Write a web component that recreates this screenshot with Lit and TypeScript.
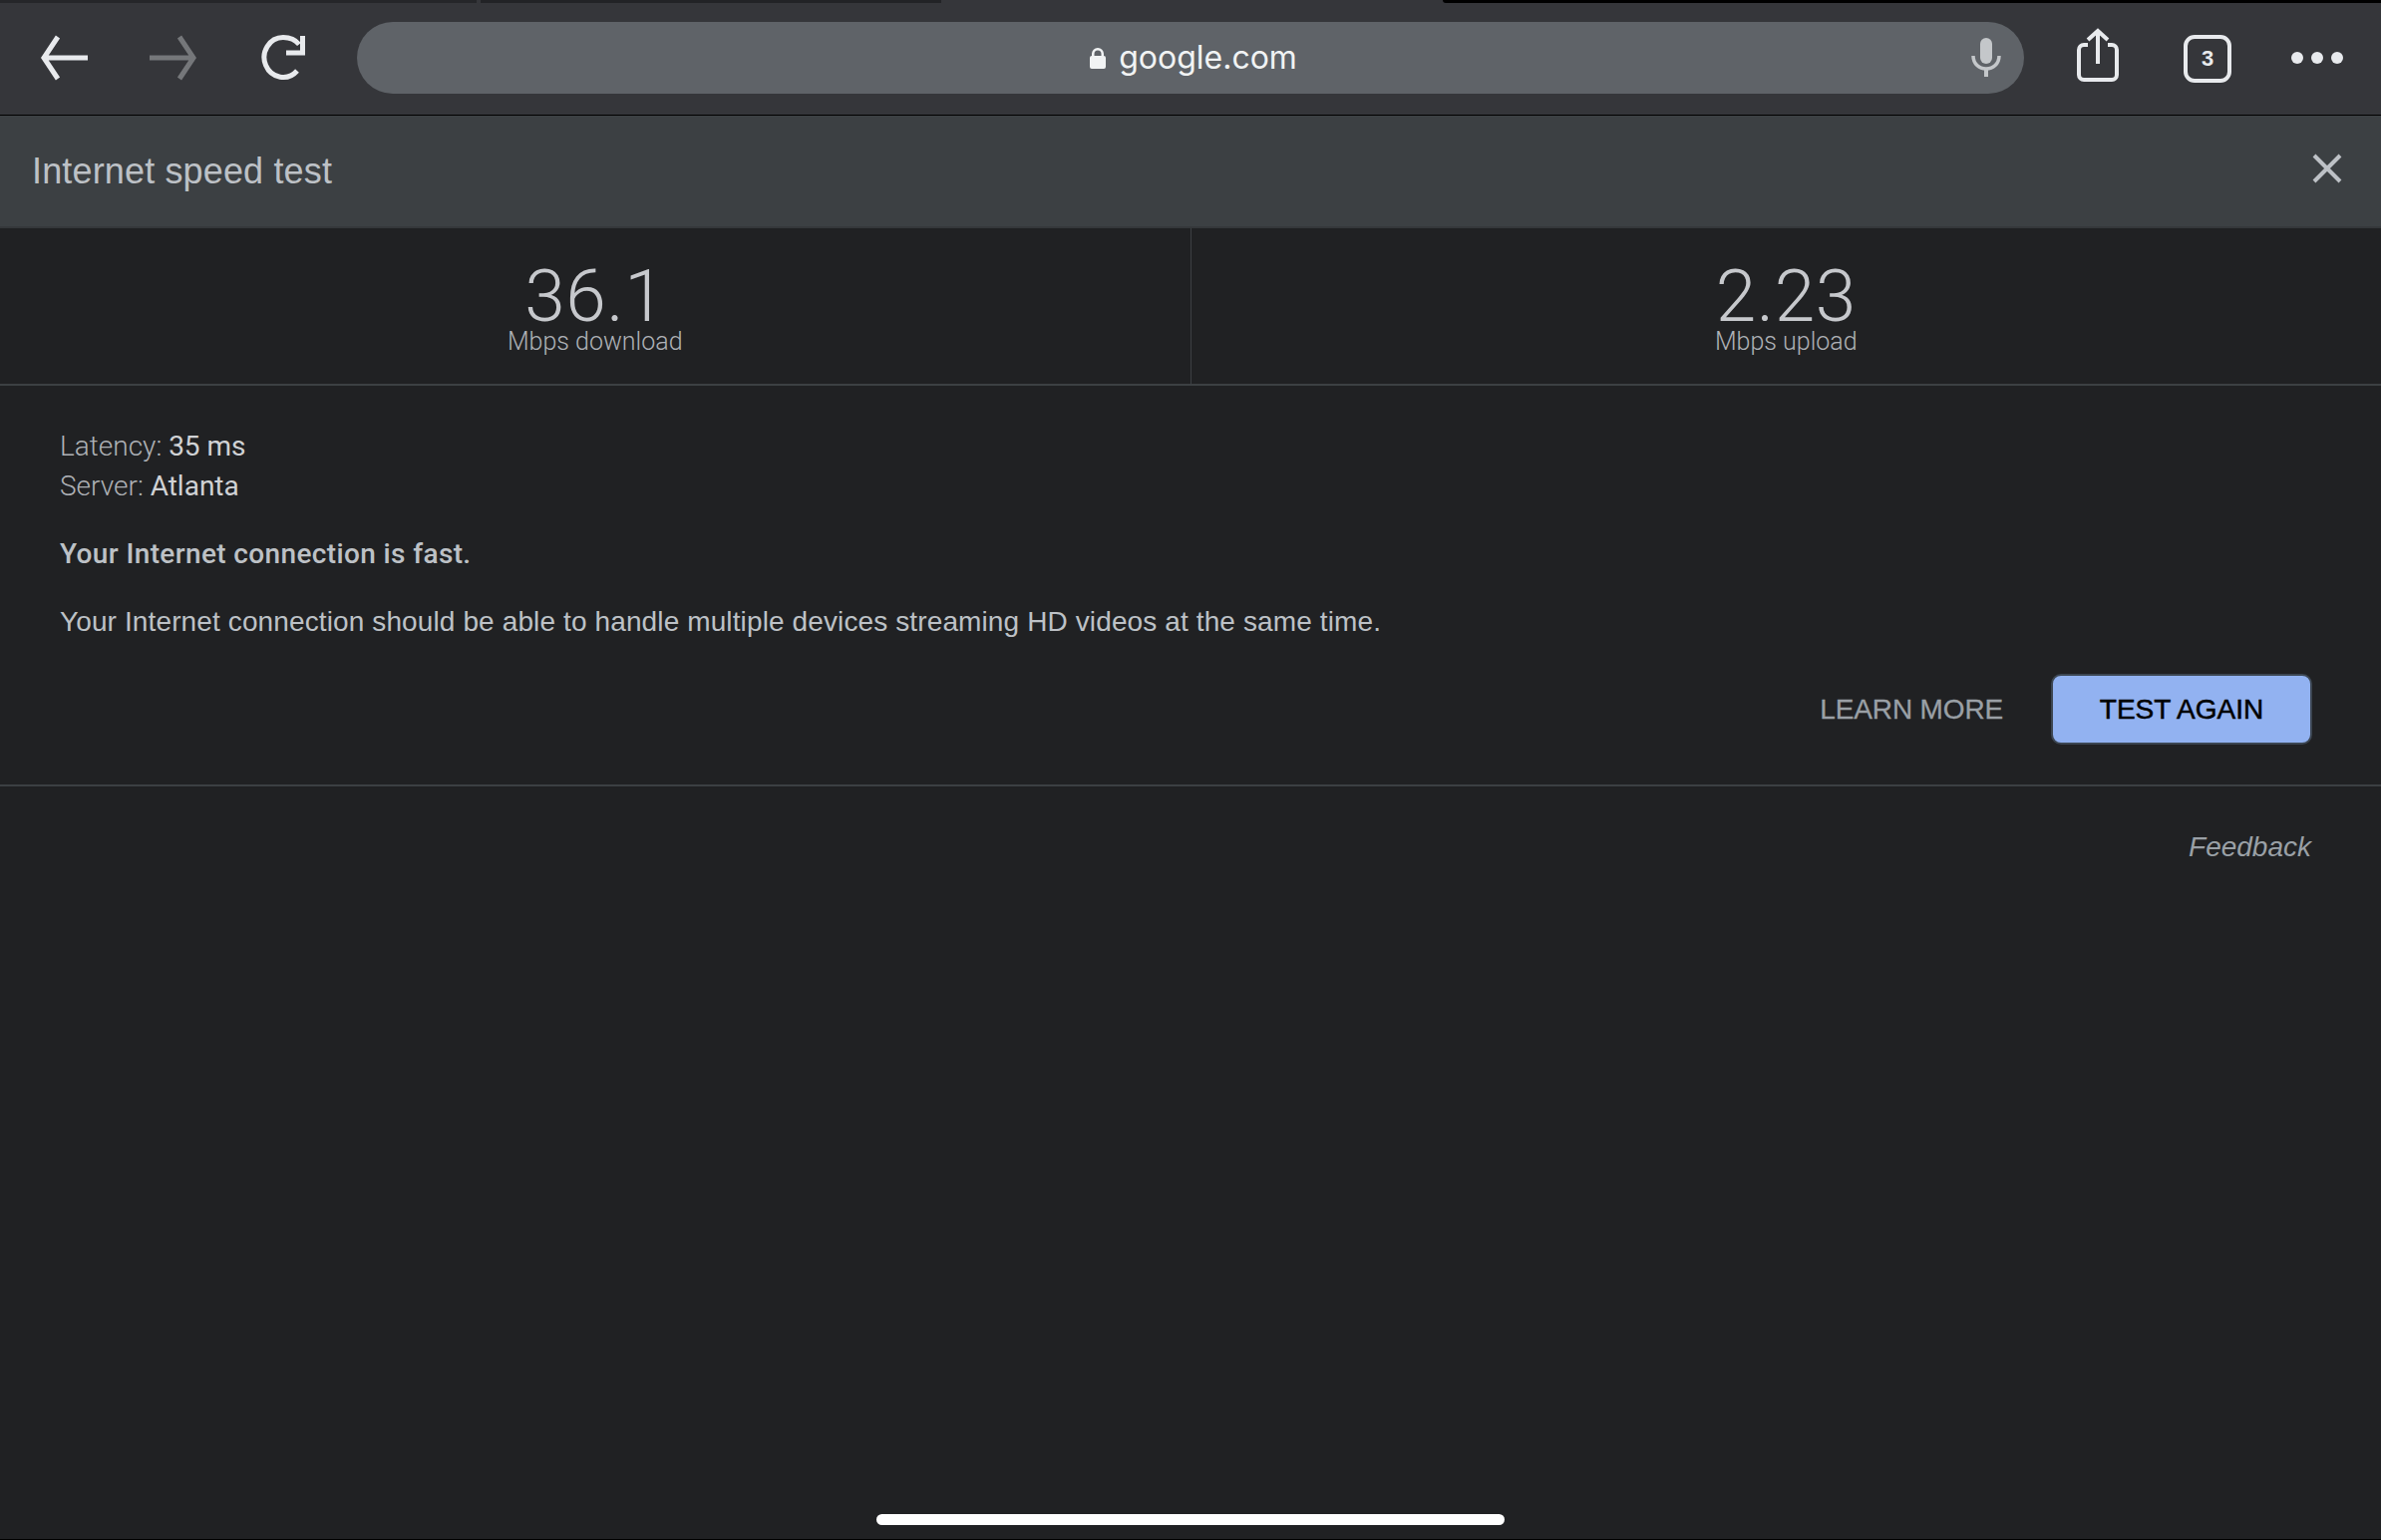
import { LitElement, html, css } from "lit";
import { customElement } from "lit/decorators.js";

@customElement("app-root")
export class AppRoot extends LitElement {
  static styles = css`
    :host {
      display: flex;
      flex-direction: column;
      position: relative;
      height: 1545px;
      overflow: hidden;
      background: #202123;
      font-family: "Liberation Sans", Arial, sans-serif;
      color: #bdc1c6;
    }

    .notch {
      position: absolute;
      top: 0;
      height: 3px;
    }
    .notch-a {
      left: 0;
      width: 478px;
      background: #252629;
    }
    .notch-b {
      left: 482px;
      width: 462px;
      background: #222326;
    }
    .notch-c {
      left: 1447px;
      width: 941px;
      background: #000;
      border-bottom-left-radius: 4px;
    }

    .toolbar {
      display: flex;
      align-items: center;
      flex: none;
      box-sizing: border-box;
      height: 116px;
      padding-top: 1px;
      background: #35363a;
      border-bottom: 1px solid #000;
    }
    .nav {
      display: flex;
      flex: none;
      width: 358px;
    }
    .nav-btn {
      display: flex;
      justify-content: center;
      width: 110px;
    }
    .nav-btn:first-child {
      margin-left: 9px;
    }
    .nav-btn:nth-child(2) {
      margin-right: 1px;
    }
    .omnibox {
      display: flex;
      align-items: center;
      justify-content: center;
      position: relative;
      flex: none;
      box-sizing: border-box;
      width: 1672px;
      height: 72px;
      padding-left: 6px;
      border-radius: 36px;
      background: #5f6368;
      color: #f1f3f4;
      font-family: Inter, "Liberation Sans", sans-serif;
      font-size: 32px;
      gap: 13px;
    }
    .url {
      margin-top: -2px;
    }
    .mic {
      position: absolute;
      right: 23px;
      top: 16px;
    }
    .actions {
      display: flex;
      align-items: center;
      flex: 1;
      padding-left: 19px;
    }
    .action {
      display: flex;
      justify-content: center;
      width: 110px;
    }
    .share {
      margin-bottom: 6px;
    }
    .dots {
      margin-left: 2px;
    }
    .tabs {
      display: flex;
      align-items: center;
      justify-content: center;
      box-sizing: border-box;
      width: 48px;
      height: 48px;
      margin-top: 2px;
      border: 4px solid #e8eaed;
      border-radius: 11px;
      color: #e8eaed;
      font-size: 22px;
      font-weight: 700;
    }

    .header {
      display: flex;
      align-items: center;
      justify-content: space-between;
      flex: none;
      box-sizing: border-box;
      height: 113px;
      padding: 1px 39px 0 32px;
      background: #3c4043;
      border-bottom: 2px solid #35383b;
      font-size: 36px;
      letter-spacing: 0.15px;
    }
    .close {
      margin-bottom: 6px;
    }

    .stats {
      display: flex;
      flex: none;
      box-sizing: border-box;
      height: 158px;
      border-bottom: 2px solid #3c4043;
    }
    .stat {
      display: flex;
      flex-direction: column;
      align-items: center;
      flex: 1;
      padding-top: 37px;
    }
    .stat + .stat {
      border-left: 1px solid #3c4043;
    }
    .stat-value {
      font-family: Roboto, "Liberation Sans", sans-serif;
      font-size: 73px;
      line-height: 62px;
      font-weight: 300;
      letter-spacing: 0.5px;
      color: #c6c8cc;
    }
    .stat-label {
      font-family: Roboto, "Liberation Sans", sans-serif;
      font-size: 25px;
      font-weight: 300;
      line-height: 28px;
      margin-top: 1px;
      color: #aeb1b6;
    }

    .result {
      flex: none;
      box-sizing: border-box;
      height: 402px;
      padding: 41px 69px 0 60px;
      border-bottom: 2px solid #3c4043;
      font-size: 28px;
    }
    .meta {
      line-height: 40px;
      font-family: Roboto, "Liberation Sans", sans-serif;
      font-weight: 300;
      color: #aeb1b6;
    }
    .meta b {
      font-weight: 400;
      color: #d0d2d5;
    }
    .headline {
      margin: 28px 0 0;
      line-height: 40px;
      font-family: Roboto, "Liberation Sans", sans-serif;
      font-weight: 500;
      letter-spacing: 0.37px;
      color: #bdc1c6;
    }
    .detail {
      margin: 28px 0 0;
      line-height: 40px;
      letter-spacing: 0.12px;
    }
    .buttons {
      display: flex;
      align-items: center;
      justify-content: flex-end;
      gap: 48px;
      margin-top: 32px;
    }
    .learn {
      font-size: 28px;
      letter-spacing: -0.15px;
      color: #9aa0a6;
      -webkit-text-stroke: 0.3px #9aa0a6;
    }
    .again {
      display: flex;
      align-items: center;
      justify-content: center;
      box-sizing: border-box;
      width: 262px;
      height: 71px;
      background: #92b2f1;
      border: 2px solid #3c4652;
      border-radius: 10px;
      color: #000;
      font-size: 28px;
      -webkit-text-stroke: 0.5px #000;
    }

    .feedback {
      align-self: flex-end;
      margin: 45px 70px 0 0;
      font-size: 28px;
      font-style: italic;
      line-height: 32px;
      color: #9aa0a6;
    }

    .home {
      position: absolute;
      left: 879px;
      bottom: 15px;
      width: 630px;
      height: 11px;
      border-radius: 6px;
      background: #fff;
    }
    .edge {
      position: absolute;
      left: 0;
      right: 0;
      bottom: 0;
      height: 1px;
      background: #000;
    }
  `;

  render() {
    return html`
      <div class="notch notch-a"></div>
      <div class="notch notch-b"></div>
      <div class="notch notch-c"></div>

      <div class="toolbar">
        <div class="nav">
          <div class="nav-btn">
            <svg width="50" height="46" viewBox="0 0 50 46" fill="none" stroke="#e8eaed" stroke-width="5">
              <path d="M49 23H5M19 2L5 23l14 21" />
            </svg>
          </div>
          <div class="nav-btn">
            <svg width="50" height="46" viewBox="0 0 50 46" fill="none" stroke="#75777a" stroke-width="5">
              <path d="M1 23h44M31 2l14 21-14 21" />
            </svg>
          </div>
          <div class="nav-btn">
            <svg width="46" height="46" viewBox="0 0 46 46" fill="none" stroke="#e8eaed" stroke-width="5">
              <path d="M36 36A19 20 0 1 1 22 2.5c7 0 12 2 16 7" />
              <path d="M41.5 1v17H25" />
            </svg>
          </div>
        </div>
        <div class="omnibox">
          <svg width="16" height="21" viewBox="0 0 16 21">
            <path
              fill="#f1f3f4"
              fill-rule="evenodd"
              d="M2 8V6a6 6 0 0 1 12 0v2a2 2 0 0 1 2 2v9a2 2 0 0 1-2 2H2a2 2 0 0 1-2-2v-9a2 2 0 0 1 2-2zm2.5 0h7V6a3.5 3.5 0 0 0-7 0z"
            />
          </svg>
          <span class="url">google.com</span>
          <svg class="mic" width="30" height="40" viewBox="0 0 30 40" fill="none">
            <rect x="9" y="0" width="12" height="26" rx="6" fill="#c4c7ca" />
            <path d="M2 18c0 8 6 13 13 13s13-5 13-13" stroke="#c4c7ca" stroke-width="3.5" />
            <path d="M15 30v9" stroke="#c4c7ca" stroke-width="4" />
          </svg>
        </div>
        <div class="actions">
          <div class="action">
            <svg class="share" width="42" height="54" viewBox="0 0 42 54" fill="none" stroke="#e8eaed" stroke-width="4">
              <path d="M11 17H7a5 5 0 0 0-5 5v25a5 5 0 0 0 5 5h28a5 5 0 0 0 5-5V22a5 5 0 0 0-5-5h-4" />
              <path d="M21 36V3M11 12l10-9 10 9" />
            </svg>
          </div>
          <div class="action">
            <div class="tabs">3</div>
          </div>
          <div class="action">
            <svg class="dots" width="54" height="12" viewBox="0 0 54 12" fill="#e8eaed">
              <circle cx="6" cy="6" r="6" />
              <circle cx="26" cy="6" r="6" />
              <circle cx="46" cy="6" r="6" />
            </svg>
          </div>
        </div>
      </div>

      <div class="header">
        <span>Internet speed test</span>
        <svg class="close" width="30" height="30" viewBox="0 0 30 30" stroke="#bdc1c6" stroke-width="4">
          <path d="M2 2l26 26M28 2L2 28" />
        </svg>
      </div>

      <div class="stats">
        <div class="stat">
          <div class="stat-value">36.1</div>
          <div class="stat-label">Mbps download</div>
        </div>
        <div class="stat">
          <div class="stat-value">2.23</div>
          <div class="stat-label">Mbps upload</div>
        </div>
      </div>

      <div class="result">
        <div class="meta">
          <div>Latency: <b>35 ms</b></div>
          <div>Server: <b>Atlanta</b></div>
        </div>
        <p class="headline">Your Internet connection is fast.</p>
        <p class="detail">
          Your Internet connection should be able to handle multiple devices streaming HD videos at the same time.
        </p>
        <div class="buttons">
          <span class="learn">LEARN MORE</span>
          <div class="again">TEST AGAIN</div>
        </div>
      </div>

      <div class="feedback">Feedback</div>

      <div class="home"></div>
      <div class="edge"></div>
    `;
  }
}
